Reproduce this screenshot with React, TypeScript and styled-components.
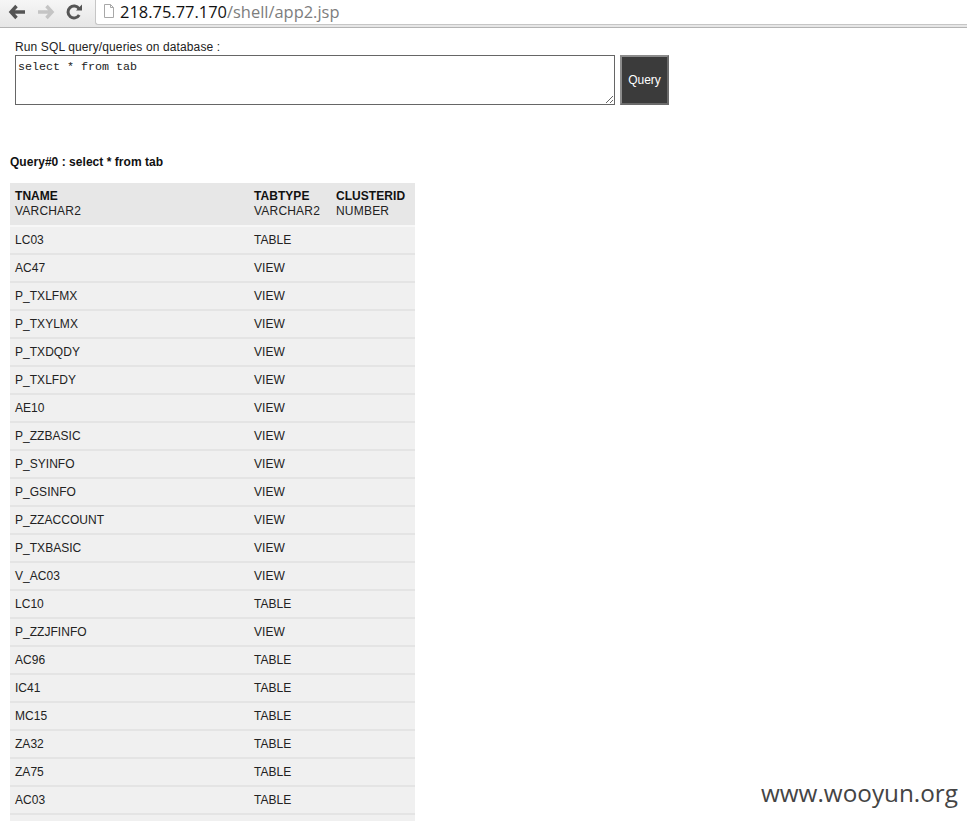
import React from "react";
import styled, { createGlobalStyle } from "styled-components";

const Global = createGlobalStyle`
  html, body { margin: 0; padding: 0; height: 821px; overflow: hidden; background: #fff; }
  body { font-family: "Liberation Sans", Arial, sans-serif; font-size: 12px; color: #222; }
`;
const Page = styled.div`
  position: relative;
  width: 967px;
  height: 821px;
  overflow: hidden;
`;
const Toolbar = styled.header`
  box-sizing: border-box;
  display: flex;
  align-items: flex-start;
  height: 28px;
  padding-left: 8px;
  background: linear-gradient(#f6f6f6, #e6e6e6);
  border-bottom: 1px solid #b4b4b4;
`;
const NavIcons = styled.div`
  display: flex;
  align-items: center;
  gap: 11px;
  width: 87px;
  height: 23px;
`;
const AddressBox = styled.div`
  box-sizing: border-box;
  flex: 1;
  height: 25px;
  display: flex;
  align-items: center;
  gap: 5px;
  padding: 0 0 2px 7px;
  background: #fff;
  border-left: 1px solid #c6c6c6;
  border-bottom: 1px solid #c6c6c6;
  border-bottom-left-radius: 3px;
  font-family: "Open Sans", "Liberation Sans", sans-serif;
  font-size: 16.45px;
`;
const Host = styled.span`color: #111;`;
const Path = styled.span`color: #7d7d7d;`;
const QueryForm = styled.form`
  padding: 12px 0 0 15px;
`;
const FormLabel = styled.div`
  font-size: 12px;
  line-height: 14px;
  letter-spacing: 0.12px;
  color: #222;
`;
const FormRow = styled.div`
  display: flex;
  gap: 5px;
  margin-top: 1px;
`;
const SqlInput = styled.textarea`
  box-sizing: border-box;
  width: 600px;
  height: 50px;
  padding: 5px 2px 2px;
  margin: 0;
  border: 1px solid #666;
  border-radius: 0;
  outline: none;
  font-family: "Liberation Mono", monospace;
  font-size: 11.67px;
  line-height: 13px;
  color: #222;
`;
const RunButton = styled.button`
  box-sizing: border-box;
  width: 49px;
  height: 50px;
  padding: 0;
  background: #3b3b3b;
  border: 2px solid;
  border-color: #8c8c8c #6a6a6a #6a6a6a #8c8c8c;
  color: #fff;
  font-family: "Liberation Sans", sans-serif;
  font-size: 12px;
`;
const ResultTitle = styled.h3`
  margin: 50px 0 0 10px;
  font-size: 12px;
  line-height: 14px;
  letter-spacing: 0.04px;
  font-weight: bold;
  color: #111;
`;
const ResultTable = styled.table`
  margin: 14px 0 0 10px;
  width: 405px;
  border-collapse: collapse;
  table-layout: fixed;
  font-size: 12px;
  color: #222;
`;
const HeadCell = styled.th`
  box-sizing: border-box;
  height: 43px;
  padding: 6px 5px 0;
  vertical-align: top;
  text-align: left;
  font-weight: normal;
  line-height: 15px;
  letter-spacing: 0.2px;
  background: #e7e7e7;
  border-bottom: 2px solid #f7f7f7;
`;
const ColName = styled.div`
  font-weight: bold;
  letter-spacing: 0.05px;
  color: #111;
`;
const Cell = styled.td`
  box-sizing: border-box;
  height: 28px;
  padding: 0 5px;
  background: #f0f0f0;
  border-bottom: 2px solid #e4e4e4;
  line-height: 15px;
  letter-spacing: 0.03px;
`;

const rows: [string, string][] = [
  ["LC03", "TABLE"], ["AC47", "VIEW"], ["P_TXLFMX", "VIEW"], ["P_TXYLMX", "VIEW"],
  ["P_TXDQDY", "VIEW"], ["P_TXLFDY", "VIEW"], ["AE10", "VIEW"], ["P_ZZBASIC", "VIEW"],
  ["P_SYINFO", "VIEW"], ["P_GSINFO", "VIEW"], ["P_ZZACCOUNT", "VIEW"], ["P_TXBASIC", "VIEW"],
  ["V_AC03", "VIEW"], ["LC10", "TABLE"], ["P_ZZJFINFO", "VIEW"], ["AC96", "TABLE"],
  ["IC41", "TABLE"], ["MC15", "TABLE"], ["ZA32", "TABLE"], ["ZA75", "TABLE"],
  ["AC03", "TABLE"], ["\u00a0", ""],
];

const Watermark = styled.div`
  position: absolute;
  right: 9px;
  bottom: 13px;
  font-family: "Open Sans", "Noto Sans", sans-serif;
  font-size: 24.3px;
  line-height: 30px;
  color: #444;
`;

export default function App() {
  return (
    <Page>
      <Global />
      <Toolbar>
        <NavIcons>
          <svg width="18" height="16" viewBox="0 0 18 16">
            <path d="M8.5 2 L3 8 L8.5 14 M3 8 H17" fill="none" stroke="#555" strokeWidth="3.4" />
          </svg>
          <svg width="18" height="16" viewBox="0 0 18 16">
            <path d="M9.5 2 L15 8 L9.5 14 M15 8 H1" fill="none" stroke="#c4c4c4" strokeWidth="3.4" />
          </svg>
          <svg width="17" height="16" viewBox="0 0 17 16">
            <path d="M13.2 11 A6 6 0 1 1 13 4.6" fill="none" stroke="#555" strokeWidth="3" />
            <path d="M10 6.5 H16 V0.5 Z" fill="#555" />
          </svg>
        </NavIcons>
        <AddressBox>
          <svg width="12" height="16" viewBox="0 0 12 16">
            <path d="M1.5 1.5 H7.5 L10.5 4.5 V14.5 H1.5 Z M7.5 1.5 V4.5 H10.5" fill="#fff" stroke="#a8a8a8" />
          </svg>
          <div>
            <Host>218.75.77.170</Host>
            <Path>/shell/app2.jsp</Path>
          </div>
        </AddressBox>
      </Toolbar>
      <QueryForm>
        <FormLabel>Run SQL query/queries on database :</FormLabel>
        <FormRow>
          <SqlInput defaultValue="select * from tab" />
          <RunButton type="button">Query</RunButton>
        </FormRow>
      </QueryForm>
      <ResultTitle>Query#0 : select * from tab</ResultTitle>
      <ResultTable>
        <colgroup>
          <col style={{ width: 239 }} />
          <col style={{ width: 82 }} />
          <col style={{ width: 84 }} />
        </colgroup>
        <thead>
          <tr>
            <HeadCell><ColName>TNAME</ColName>VARCHAR2</HeadCell>
            <HeadCell><ColName>TABTYPE</ColName>VARCHAR2</HeadCell>
            <HeadCell><ColName>CLUSTERID</ColName>NUMBER</HeadCell>
          </tr>
        </thead>
        <tbody>
          {rows.map(([name, type], i) => (
            <tr key={i}>
              <Cell>{name}</Cell>
              <Cell>{type}</Cell>
              <Cell />
            </tr>
          ))}
        </tbody>
      </ResultTable>
      <Watermark>www.wooyun.org</Watermark>
    </Page>
  );
}
